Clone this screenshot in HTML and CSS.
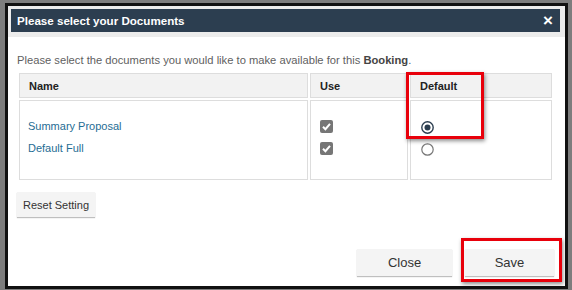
FILE: index.html
```html
<!DOCTYPE html>
<html lang="en">

<head>
    <meta charset="UTF-8">
    <title>Please select your Documents</title>
    <link rel="stylesheet" href="styles.css">
</head>

<body>

    <div class="dialog">
        <div class="titlebar">
            <div class="title">
                <span>Please select your Documents</span>
                <span class="close-x">&times;</span>
            </div>
        </div>

        <div class="content">
            <p class="intro">Please select the documents you would like to make available for this <b>Booking</b>.</p>

            <table class="docs">
                <tr>
                    <th class="col-name">Name</th>
                    <th class="col-use">Use</th>
                    <th class="col-default">Default</th>
                </tr>
                <tr>
                    <td>
                        <div class="line"><a href="#">Summary Proposal</a></div>
                        <div class="line"><a href="#">Default Full</a></div>
                    </td>
                    <td>
                        <div class="line">
                            <svg class="check" width="13" height="13" viewBox="0 0 13 13"><rect width="13" height="13" rx="2" fill="#767676"/><path d="M3 6.8 L5.4 9.2 L10 3.8" fill="none" stroke="#fff" stroke-width="2"/></svg>
                        </div>
                        <div class="line">
                            <svg class="check" width="13" height="13" viewBox="0 0 13 13"><rect width="13" height="13" rx="2" fill="#767676"/><path d="M3 6.8 L5.4 9.2 L10 3.8" fill="none" stroke="#fff" stroke-width="2"/></svg>
                        </div>
                    </td>
                    <td>
                        <div class="line radio-line">
                            <svg width="13" height="13" viewBox="0 0 13 13"><circle cx="6.5" cy="6.5" r="5.7" fill="#fff" stroke="#2c3e50" stroke-width="1.4"/><circle cx="6.5" cy="6.5" r="3" fill="#2c3e50"/></svg>
                        </div>
                        <div class="line radio-line">
                            <svg width="13" height="13" viewBox="0 0 13 13"><circle cx="6.5" cy="6.5" r="5.7" fill="#fff" stroke="#777" stroke-width="1.2"/></svg>
                        </div>
                    </td>
                </tr>
            </table>

            <button class="btn btn-reset">Reset Setting</button>
        </div>

        <div class="footer">
            <button class="btn btn-close">Close</button>
            <button class="btn btn-save">Save</button>
        </div>

        <!-- red highlight marks drawn over the dialog -->
        <div class="mark mark-default"></div>
        <div class="mark mark-save"></div>
    </div>

</body>

</html>
```

FILE: styles.css
```css
body {
    margin: 0;
    padding: 3px 4px 0 5px;
    background-color: #7d7d7d;
    font-family: "Liberation Sans", Arial, sans-serif;
    color: #333;
    height: 290px;
    box-sizing: border-box;
    overflow: hidden;
}

.dialog {
    position: relative;
    width: 563px;
    height: 286px;
    box-sizing: border-box;
    border: 3px solid #111;
    background-color: #fff;
    display: flex;
    flex-direction: column;
}

.titlebar {
    background-color: #ececec;
    padding: 3px 5px 5px 3px;
}

.title {
    height: 23px;
    background-color: #2c3e50;
    color: #fff;
    font-weight: bold;
    font-size: 11.6px;
    display: flex;
    align-items: center;
    justify-content: space-between;
    padding: 0 7px 0 6px;
}

.close-x {
    font-size: 17px;
    line-height: 1;
}

.content {
    padding: 0 11px 0 9px;
}

.intro {
    margin: 16px 0 0;
    font-size: 11.2px;
    line-height: 14px;
    color: #5f5f5f;
}

.intro b {
    color: #444;
}

.docs {
    margin-top: 4px;
    width: 100%;
    border-collapse: separate;
    border-spacing: 2px;
    font-size: 11px;
}

.docs th,
.docs td {
    border: 1px solid #ddd;
    text-align: left;
}

.docs th {
    height: 23px;
    padding: 0 8px 0 9px;
    background-color: #f2f2f2;
    color: #222;
}

.col-name {
    width: 270px;
}

.col-use {
    width: 79px;
}

.docs td {
    height: 80px;
    padding: 14px 8px 0 8px;
    vertical-align: top;
    box-sizing: border-box;
}

.line {
    height: 22px;
    display: flex;
    align-items: center;
}

.line a {
    color: #1f6d94;
    text-decoration: none;
}

.check {
    margin-left: 1px;
}

.radio-line svg {
    margin: 3px 0 0 2px;
}

.btn {
    border: none;
    background-color: #f4f4f4;
    box-shadow: 0 1px 1px rgba(0, 0, 0, 0.25);
    font-family: "Liberation Sans", Arial, sans-serif;
    color: #333;
    cursor: pointer;
}

.btn-reset {
    margin-top: 10px;
    width: 78px;
    height: 25px;
    font-size: 11px;
    padding: 0;
}

.footer {
    margin-top: auto;
    padding: 0 11px 10px 0;
    display: flex;
    justify-content: flex-end;
    gap: 13px;
}

.btn-close,
.btn-save {
    height: 27px;
    font-size: 13px;
}

.btn-close {
    width: 95px;
}

.btn-save {
    width: 89px;
}

.mark {
    position: absolute;
    border: 3px solid #e8000b;
    box-shadow: 1px 2px 4px rgba(0, 0, 0, 0.45);
}

.mark-default {
    left: 398px;
    top: 66px;
    width: 72px;
    height: 61px;
}

.mark-save {
    left: 453px;
    top: 232px;
    width: 95px;
    height: 38px;
}
```
